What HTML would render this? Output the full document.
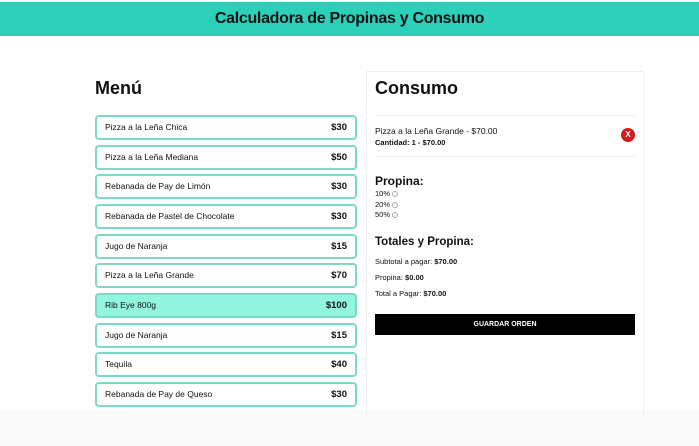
<!DOCTYPE html>
<html><head><meta charset="utf-8"><style>
*{margin:0;padding:0;box-sizing:border-box}
body{width:699px;height:446px;overflow:hidden;background:#fff;font-family:"Liberation Sans",sans-serif;color:#111;position:relative}
.hdr{position:absolute;left:0;top:2px;width:699px;height:34px;background:#2ccfb8;text-align:center;font-weight:bold;font-size:16px;line-height:34px;letter-spacing:-0.3px}
h2{position:absolute;font-size:18px;font-weight:bold}
.item{position:absolute;left:95px;width:262px;height:25px;border:2px solid #7dd8c8;border-radius:4px;padding:0 8px;display:flex;justify-content:space-between;align-items:center;background:#fff}
.item span{font-size:8.5px;line-height:1}
.item b{font-size:9.5px;line-height:1}
.item.hl{background:#92f5de}
.panel{position:absolute;left:366px;top:71px;width:278px;height:345px;border:1px solid #f0f0f0;border-bottom:none}
.abs{position:absolute}
.s{font-size:8px}
.radio{display:inline-block;width:6px;height:6px;border:1px solid #aaa;border-radius:50%;vertical-align:middle;margin-left:2px}
.foot{position:absolute;left:0;top:410px;width:699px;height:36px;background:#fafafa}
</style></head><body>
<div class="hdr">Calculadora de Propinas y Consumo</div>
<div class="foot"></div>
<h2 style="left:95px;top:78px">Menú</h2>
<div class="item" style="top:115px"><span>Pizza a la Leña Chica</span><b>$30</b></div>
<div class="item" style="top:145px"><span>Pizza a la Leña Mediana</span><b>$50</b></div>
<div class="item" style="top:174px"><span>Rebanada de Pay de Limón</span><b>$30</b></div>
<div class="item" style="top:204px"><span>Rebanada de Pastel de Chocolate</span><b>$30</b></div>
<div class="item" style="top:234px"><span>Jugo de Naranja</span><b>$15</b></div>
<div class="item" style="top:263px"><span>Pizza a la Leña Grande</span><b>$70</b></div>
<div class="item hl" style="top:293px"><span>Rib Eye 800g</span><b>$100</b></div>
<div class="item" style="top:323px"><span>Jugo de Naranja</span><b>$15</b></div>
<div class="item" style="top:352px"><span>Tequila</span><b>$40</b></div>
<div class="item" style="top:382px"><span>Rebanada de Pay de Queso</span><b>$30</b></div>
<div class="panel"></div>
<h2 style="left:375px;top:78px">Consumo</h2>
<div class="abs" style="left:375px;top:115px;width:260px;border-top:1px solid #eee"></div>
<div class="abs s" style="left:375px;top:126px;font-size:8.5px">Pizza a la Leña Grande - $70.00</div>
<div class="abs s" style="left:375px;top:138px;font-weight:bold;font-size:7.5px">Cantidad: 1 - $70.00</div>
<div class="abs" style="left:621px;top:128px;width:14px;height:14px;border-radius:50%;background:#d01c1c;color:#fff;font-size:8px;font-weight:bold;text-align:center;line-height:14px">X</div>
<div class="abs" style="left:375px;top:156px;width:260px;border-top:1px solid #eee"></div>
<div class="abs" style="left:375px;top:174px;font-size:12px;font-weight:bold">Propina:</div>
<div class="abs s" style="left:375px;top:189px;line-height:10.5px;font-size:7.5px">10%<span class="radio"></span><br>20%<span class="radio"></span><br>50%<span class="radio"></span></div>
<div class="abs" style="left:375px;top:236px;font-size:11.5px;font-weight:bold">Totales y Propina:</div>
<div class="abs s" style="left:375px;top:257px;font-size:7.5px">Subtotal a pagar: <b>$70.00</b></div>
<div class="abs s" style="left:375px;top:273px;font-size:7.5px">Propina: <b>$0.00</b></div>
<div class="abs s" style="left:375px;top:289px;font-size:7.5px">Total a Pagar: <b>$70.00</b></div>
<div class="abs" style="left:375px;top:314px;width:260px;height:21px;background:#000;color:#fff;font-size:7px;font-weight:bold;text-align:center;line-height:21px">GUARDAR ORDEN</div>
</body></html>
